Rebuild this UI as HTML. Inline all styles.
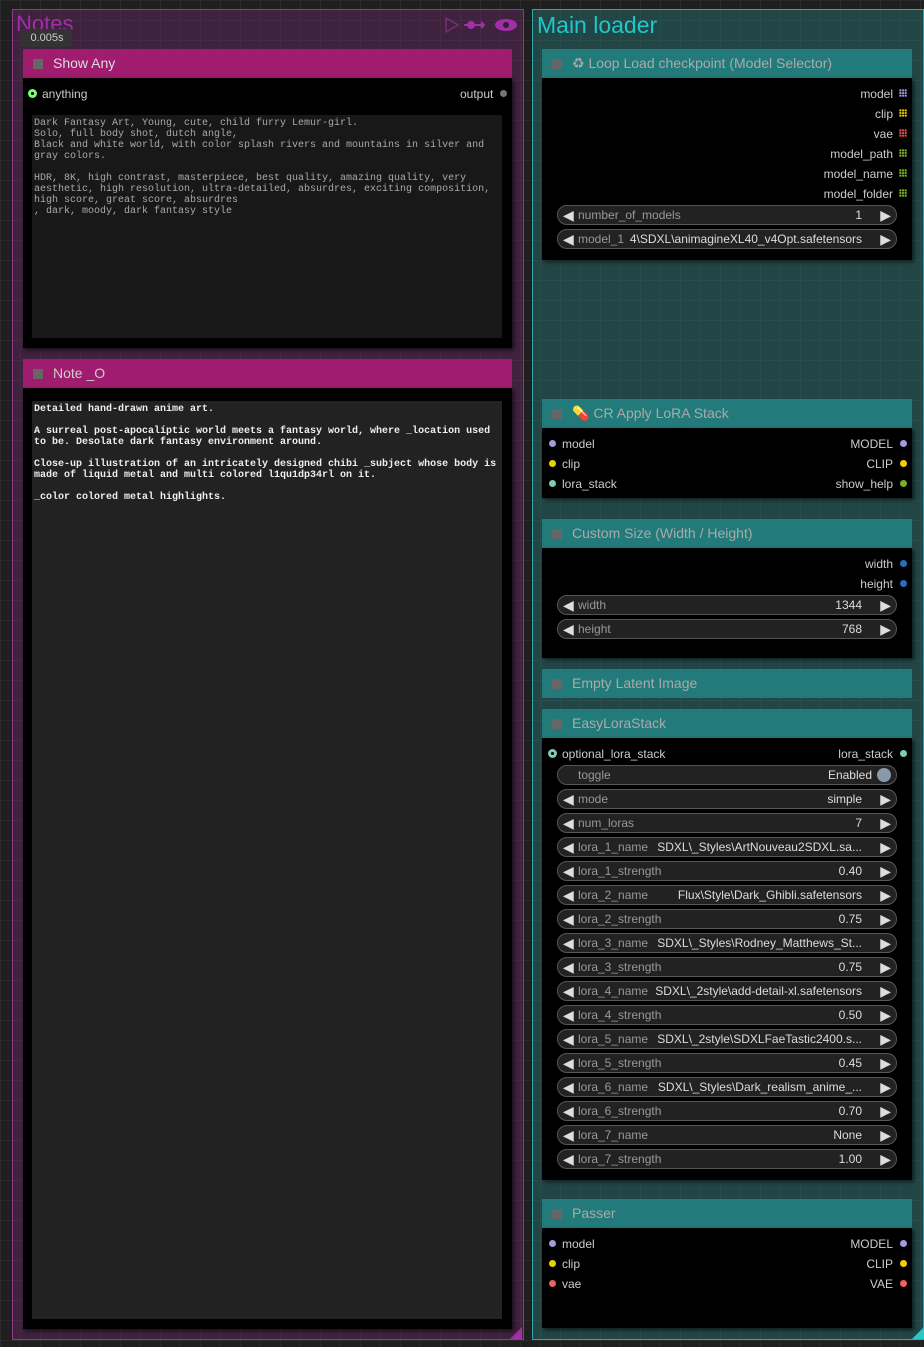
<!DOCTYPE html>
<html><head><meta charset="utf-8"><style>
*{margin:0;padding:0;box-sizing:border-box}
body{width:924px;height:1347px;overflow:hidden;background-color:#1f1f1f;
background-image:linear-gradient(#2a2a2a 1px,transparent 1px),linear-gradient(90deg,#2a2a2a 1px,transparent 1px);background-size:20px 20px;
font-family:"Liberation Sans",sans-serif;font-size:12px;position:relative}
.a{position:absolute}
.grp{position:absolute}
.hdr{position:absolute;height:29px;font-size:14px;line-height:29px;padding-left:30px}
.hdr:before{content:"";position:absolute;left:10px;top:10px;width:10px;height:10px;background:#666}
.body{position:absolute;background:#000;box-shadow:2px 2px 4px rgba(0,0,0,.6)}
.txt{position:absolute;font-family:"Liberation Mono",monospace;font-size:10px;line-height:11px;white-space:pre;padding:3px 2px}
.l{position:absolute;color:#ccc;font-size:12px;line-height:14px}
.dot{position:absolute;width:7px;height:7px;border-radius:50%}
.w{position:absolute;left:557px;width:340px;height:20px;border:1px solid #555;border-radius:10px;background:#222;font-size:12px;line-height:18px;color:#999}
.w .lt{position:absolute;left:5px;color:#ddd;font-size:14px}
.w .rt{position:absolute;right:5px;color:#ddd;font-size:14px}
.w .lb{position:absolute;left:20px}
.w .v{position:absolute;right:34px;color:#ddd;white-space:nowrap}
.grid{position:absolute;width:8px;height:8px;background-image:radial-gradient(circle,currentColor 1px,transparent 1.3px);background-size:2.7px 2.7px}
</style></head><body>

<div class="grp" style="left:12px;top:9px;width:512px;height:1331px;background:rgba(120,40,120,.35);border:1px solid #8c3a8c"></div>
<div class="a" style="left:16px;top:10px;color:#a02fa8;font-size:22px;line-height:28px">Notes</div>
<div class="a" style="left:22px;top:29px;width:50px;height:18px;background:#333;color:#ccc;font-size:11px;line-height:18px;text-align:center">0.005s</div>
<svg class="a" style="left:444px;top:16px" width="76" height="18" viewBox="0 0 76 18">
<path d="M2 2 L14 9 L2 16 Z" fill="none" stroke="#7a2a7a" stroke-width="1.5"/>
<circle cx="27" cy="9" r="4" fill="#a02fa8"/><path d="M20 9 H40 M37 6 L40 9 L37 12" stroke="#a02fa8" stroke-width="2" fill="none"/>
<ellipse cx="62" cy="9" rx="11" ry="6" fill="#a02fa8"/><circle cx="62" cy="9" r="3" fill="#3a1a3a"/>
</svg>
<div class="a" style="left:510px;top:1327px;width:0;height:0;border-left:12px solid transparent;border-bottom:12px solid #a02fa8"></div>

<div class="hdr" style="left:23px;top:49px;width:489px;background:#a01c6e;color:#ddd">Show Any</div>
<div class="body" style="left:23px;top:78px;width:489px;height:270px"></div>
<div class="dot" style="left:28px;top:89px;width:9px;height:9px;background:#7f7"></div>
<div class="a" style="left:31px;top:92px;width:3px;height:3px;border-radius:50%;background:#000"></div>
<div class="l" style="left:42px;top:87px">anything</div>
<div class="l" style="left:460px;top:87px">output</div>
<div class="dot" style="left:500px;top:90px;background:#777"></div>
<div class="txt" style="left:32px;top:115px;width:470px;height:223px;background:#181818;color:#aaa">Dark Fantasy Art, Young, cute, child furry Lemur-girl.
Solo, full body shot, dutch angle,
Black and white world, with color splash rivers and mountains in silver and
gray colors.

HDR, 8K, high contrast, masterpiece, best quality, amazing quality, very
aesthetic, high resolution, ultra-detailed, absurdres, exciting composition,
high score, great score, absurdres
, dark, moody, dark fantasy style</div>

<div class="hdr" style="left:23px;top:359px;width:489px;background:#a01c6e;color:#ccc">Note _O</div>
<div class="body" style="left:23px;top:388px;width:489px;height:941px"></div>
<div class="txt" style="left:32px;top:401px;width:470px;height:918px;background:#222;color:#eee;font-weight:bold">Detailed hand-drawn anime art.

A surreal post-apocalíptic world meets a fantasy world, where _location used
to be. Desolate dark fantasy environment around.

Close-up illustration of an intricately designed chibi _subject whose body is
made of liquid metal and multi colored l1qu1dp34rl on it.

_color colored metal highlights.</div>

<div class="grp" style="left:532px;top:9px;width:392px;height:1331px;background:rgba(40,130,130,.4);border:1px solid #2aa8a8"></div>
<div class="a" style="left:537px;top:10px;color:#1ec8c8;font-size:23px;line-height:30px">Main loader</div>
<div class="a" style="left:912px;top:1327px;width:0;height:0;border-left:12px solid transparent;border-bottom:12px solid #2ac8c8"></div>

<div class="hdr" style="left:542px;top:49px;width:370px;background:#237a7a;color:#aaa">♻ Loop Load checkpoint (Model Selector)</div>
<div class="body" style="left:542px;top:78px;width:370px;height:182px"></div>
<div class="l" style="right:31px;top:87px">model</div><div class="grid" style="left:899px;top:89px;color:#a98fdc"></div>
<div class="l" style="right:31px;top:107px">clip</div><div class="grid" style="left:899px;top:109px;color:#e8c000"></div>
<div class="l" style="right:31px;top:127px">vae</div><div class="grid" style="left:899px;top:129px;color:#e05050"></div>
<div class="l" style="right:31px;top:147px">model_path</div><div class="grid" style="left:899px;top:149px;color:#7ab020"></div>
<div class="l" style="right:31px;top:167px">model_name</div><div class="grid" style="left:899px;top:169px;color:#7ab020"></div>
<div class="l" style="right:31px;top:187px">model_folder</div><div class="grid" style="left:899px;top:189px;color:#7ab020"></div>
<div class="w" style="top:205px"><span class="lt">◀</span><span class="lb">number_of_models</span><span class="v">1</span><span class="rt">▶</span></div>
<div class="w" style="top:229px"><span class="lt">◀</span><span class="lb">model_1</span><span class="v">4\SDXL\animagineXL40_v4Opt.safetensors</span><span class="rt">▶</span></div>

<div class="hdr" style="left:542px;top:399px;width:370px;background:#237a7a;color:#aaa"><span style="color:#e33">💊</span> CR Apply LoRA Stack</div>
<div class="body" style="left:542px;top:428px;width:370px;height:70px"></div>
<div class="dot" style="left:549px;top:440px;background:#a898d8"></div><div class="l" style="left:562px;top:437px">model</div>
<div class="dot" style="left:549px;top:460px;background:#f0d000"></div><div class="l" style="left:562px;top:457px">clip</div>
<div class="dot" style="left:549px;top:480px;background:#80c8b8"></div><div class="l" style="left:562px;top:477px">lora_stack</div>
<div class="l" style="right:31px;top:437px">MODEL</div><div class="dot" style="left:900px;top:440px;background:#a898d8"></div>
<div class="l" style="right:31px;top:457px">CLIP</div><div class="dot" style="left:900px;top:460px;background:#f0d000"></div>
<div class="l" style="right:31px;top:477px">show_help</div><div class="dot" style="left:900px;top:480px;background:#7ab020"></div>

<div class="hdr" style="left:542px;top:519px;width:370px;background:#237a7a;color:#aaa">Custom Size (Width / Height)</div>
<div class="body" style="left:542px;top:548px;width:370px;height:110px"></div>
<div class="l" style="right:31px;top:557px">width</div><div class="dot" style="left:900px;top:560px;background:#2a70b8"></div>
<div class="l" style="right:31px;top:577px">height</div><div class="dot" style="left:900px;top:580px;background:#2a70b8"></div>
<div class="w" style="top:595px"><span class="lt">◀</span><span class="lb">width</span><span class="v">1344</span><span class="rt">▶</span></div>
<div class="w" style="top:619px"><span class="lt">◀</span><span class="lb">height</span><span class="v">768</span><span class="rt">▶</span></div>

<div class="hdr" style="left:542px;top:669px;width:370px;background:#237a7a;color:#aaa">Empty Latent Image</div>

<div class="hdr" style="left:542px;top:709px;width:370px;background:#237a7a;color:#aaa">EasyLoraStack</div>
<div class="body" style="left:542px;top:738px;width:370px;height:442px"></div>
<div class="dot" style="left:548px;top:749px;width:9px;height:9px;background:#80c8b8"></div><div class="a" style="left:551px;top:752px;width:3px;height:3px;border-radius:50%;background:#000"></div>
<div class="l" style="left:562px;top:747px">optional_lora_stack</div>
<div class="l" style="right:31px;top:747px">lora_stack</div><div class="dot" style="left:900px;top:750px;background:#80c8b8"></div>
<div class="w" style="top:765px"><span class="lb">toggle</span><span class="v" style="right:24px">Enabled</span><span class="a" style="right:5px;top:2px;width:14px;height:14px;border-radius:50%;background:#8899aa"></span></div>
<div class="w" style="top:789px"><span class="lt">◀</span><span class="lb">mode</span><span class="v">simple</span><span class="rt">▶</span></div>
<div class="w" style="top:813px"><span class="lt">◀</span><span class="lb">num_loras</span><span class="v">7</span><span class="rt">▶</span></div>
<div class="w" style="top:837px"><span class="lt">◀</span><span class="lb">lora_1_name</span><span class="v">SDXL\_Styles\ArtNouveau2SDXL.sa...</span><span class="rt">▶</span></div>
<div class="w" style="top:861px"><span class="lt">◀</span><span class="lb">lora_1_strength</span><span class="v">0.40</span><span class="rt">▶</span></div>
<div class="w" style="top:885px"><span class="lt">◀</span><span class="lb">lora_2_name</span><span class="v">Flux\Style\Dark_Ghibli.safetensors</span><span class="rt">▶</span></div>
<div class="w" style="top:909px"><span class="lt">◀</span><span class="lb">lora_2_strength</span><span class="v">0.75</span><span class="rt">▶</span></div>
<div class="w" style="top:933px"><span class="lt">◀</span><span class="lb">lora_3_name</span><span class="v">SDXL\_Styles\Rodney_Matthews_St...</span><span class="rt">▶</span></div>
<div class="w" style="top:957px"><span class="lt">◀</span><span class="lb">lora_3_strength</span><span class="v">0.75</span><span class="rt">▶</span></div>
<div class="w" style="top:981px"><span class="lt">◀</span><span class="lb">lora_4_name</span><span class="v">SDXL\_2style\add-detail-xl.safetensors</span><span class="rt">▶</span></div>
<div class="w" style="top:1005px"><span class="lt">◀</span><span class="lb">lora_4_strength</span><span class="v">0.50</span><span class="rt">▶</span></div>
<div class="w" style="top:1029px"><span class="lt">◀</span><span class="lb">lora_5_name</span><span class="v">SDXL\_2style\SDXLFaeTastic2400.s...</span><span class="rt">▶</span></div>
<div class="w" style="top:1053px"><span class="lt">◀</span><span class="lb">lora_5_strength</span><span class="v">0.45</span><span class="rt">▶</span></div>
<div class="w" style="top:1077px"><span class="lt">◀</span><span class="lb">lora_6_name</span><span class="v">SDXL\_Styles\Dark_realism_anime_...</span><span class="rt">▶</span></div>
<div class="w" style="top:1101px"><span class="lt">◀</span><span class="lb">lora_6_strength</span><span class="v">0.70</span><span class="rt">▶</span></div>
<div class="w" style="top:1125px"><span class="lt">◀</span><span class="lb">lora_7_name</span><span class="v">None</span><span class="rt">▶</span></div>
<div class="w" style="top:1149px"><span class="lt">◀</span><span class="lb">lora_7_strength</span><span class="v">1.00</span><span class="rt">▶</span></div>

<div class="hdr" style="left:542px;top:1199px;width:370px;background:#237a7a;color:#aaa">Passer</div>
<div class="body" style="left:542px;top:1228px;width:370px;height:100px"></div>
<div class="dot" style="left:549px;top:1240px;background:#a898d8"></div><div class="l" style="left:562px;top:1237px">model</div>
<div class="dot" style="left:549px;top:1260px;background:#f0d000"></div><div class="l" style="left:562px;top:1257px">clip</div>
<div class="dot" style="left:549px;top:1280px;background:#f06060"></div><div class="l" style="left:562px;top:1277px">vae</div>
<div class="l" style="right:31px;top:1237px">MODEL</div><div class="dot" style="left:900px;top:1240px;background:#a898d8"></div>
<div class="l" style="right:31px;top:1257px">CLIP</div><div class="dot" style="left:900px;top:1260px;background:#f0d000"></div>
<div class="l" style="right:31px;top:1277px">VAE</div><div class="dot" style="left:900px;top:1280px;background:#f06060"></div>

</body></html>
